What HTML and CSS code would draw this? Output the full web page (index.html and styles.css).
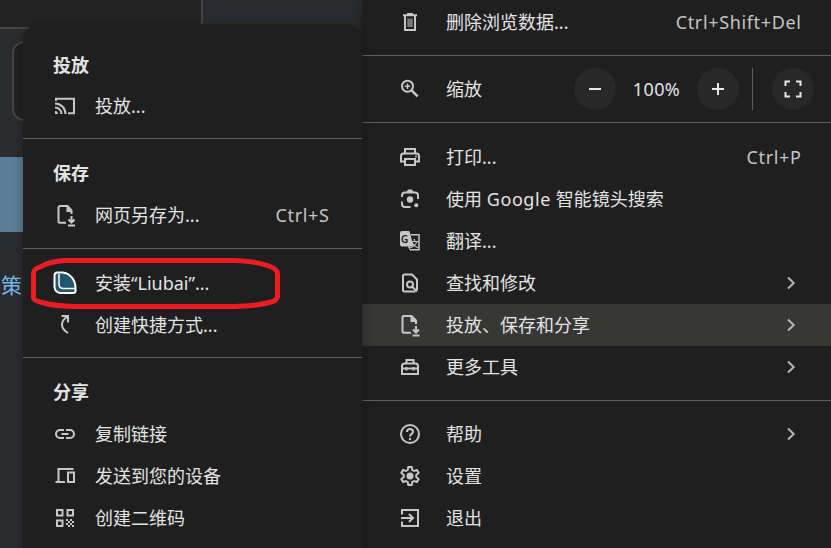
FILE: index.html
```html
<!DOCTYPE html>
<html lang="zh-CN">
<head>
<meta charset="utf-8">
<title>菜单</title>
<link rel="stylesheet" href="styles.css">
</head>
<body>
<div class="page">
  <div class="panel"></div>
  <div class="field"></div>
  <div class="banner"></div>
  <div class="link">策</div>
</div>

<nav class="menu main">
  <div class="item"><svg class="icon" viewBox="0 0 24 24"><path class="s" d="M5 5.2h14M9 4h6M7 6v14h10V6"/><path class="s thin" d="M10.1 8.5v8.5M12 8.5v8.5M13.9 8.5v8.5"/></svg><span class="label">删除浏览数据...</span><span class="key">Ctrl+Shift+Del</span></div>
  <hr>
  <div class="item zoom"><svg class="icon" viewBox="0 0 24 24"><circle class="s" cx="9.5" cy="9.2" r="5.5"/><path class="s bold" d="M13.6 13.3l6 6"/><path class="s mid" d="M6.800 9.2h5.400M9.5 6.500v5.400"/></svg><span class="label">缩放</span>
    <span class="round"><svg class="icon bright" viewBox="0 0 24 24"><path class="s" d="M6 12h12"/></svg></span>
    <span class="percent">100%</span>
    <span class="round"><svg class="icon bright" viewBox="0 0 24 24"><path class="s" d="M6 12h12M12 6v12"/></svg></span>
    <span class="rule"></span>
    <span class="round"><svg class="icon bright" viewBox="0 0 24 24"><path class="s" d="M4.500 9V4.500H9M15 4.500h4.500V9M19.500 15v4.500H15M9 19.500H4.500V15"/></svg></span>
  </div>
  <hr class="wide">
  <div class="item"><svg class="icon" viewBox="0 0 24 24"><path class="s" d="M7 8V4h10v4M7 16.500H3V11q0-2.500 2.500-2.500h13Q21 8.500 21 11v5.500h-4M7 14h10v6H7z"/><circle class="f" cx="18" cy="11.500" r="1"/></svg><span class="label">打印...</span><span class="key">Ctrl+P</span></div>
  <div class="item"><svg class="icon" viewBox="0 0 24 24"><path class="s" d="M4 10V8.500Q4 5.500 7 5.500h10q3 0 3 3V12M4 14.500V17q0 3 3 3h5.500"/><path class="f" d="M8.500 5L10 2.500h4L15.500 5z"/><circle class="f" cx="12" cy="12.500" r="3.200"/><circle class="f" cx="18.300" cy="18.200" r="2"/></svg><span class="label">使用 <span class="latin">Google</span> 智能镜头搜索</span></div>
  <div class="item"><svg class="icon" viewBox="0 0 24 24"><path class="s mid" d="M13 5.800h8v15h-9"/><path class="f" d="M4 2h6.500q1 0 1.300 1L15.500 17.500H12v4L10 17.500H4q-2 0-2-2V4q0-2 2-2z"/><text class="glyph dark" x="2.800" y="13.800">G</text><text class="glyph han" x="11.500" y="17.800">文</text></svg><span class="label">翻译...</span></div>
  <div class="item"><svg class="icon" viewBox="0 0 24 24"><path class="s" d="M17.500 20.500H6.500Q5 20.500 5 19V5q0-1.500 1.500-1.500H14L19 8.500V19"/><circle class="s" cx="12" cy="13.500" r="3"/><path class="s" d="M14 15.500l5 5"/></svg><span class="label">查找和修改</span><svg class="chev" viewBox="0 0 12 16"><path d="M3 2.500L8.700 8 3 13.500"/></svg></div>
  <div class="item active"><svg class="icon" viewBox="0 0 24 24"><path class="s" d="M13 19.800H6Q4.500 19.800 4.500 18.300V4.500Q4.500 3 6 3h7.500L18 7.500V11M18 13v6.500M15 16.500l3 3 3-3M14.500 22.500h7"/><path class="f" d="M12.500 3v6H19z"/></svg><span class="label">投放、保存和分享</span><svg class="chev" viewBox="0 0 12 16"><path d="M3 2.500L8.700 8 3 13.500"/></svg></div>
  <div class="item"><svg class="icon" viewBox="0 0 24 24"><path class="s" d="M8.500 8V5h7v3M4 19V11q0-2.500 2.500-2.500h11Q20 8.500 20 11v8zM4 13.500h16M8.500 12v3.500M15.500 12v3.500"/></svg><span class="label">更多工具</span><svg class="chev" viewBox="0 0 12 16"><path d="M3 2.500L8.700 8 3 13.500"/></svg></div>
  <hr>
  <div class="item"><svg class="icon" viewBox="0 0 24 24"><circle class="s" cx="12" cy="12" r="9"/><path class="s" d="M9 10q0-3 3-3t3 2.800c0 2-3 2.200-3 4.700"/><circle class="f" cx="12" cy="17" r="1.200"/></svg><span class="label">帮助</span><svg class="chev" viewBox="0 0 12 16"><path d="M3 2.500L8.700 8 3 13.500"/></svg></div>
  <div class="item"><svg class="icon" viewBox="0 0 24 24"><path class="s" d="M10.300 3h3.400l.5 2.900 1.900 1.100 2.800-1 1.700 2.900-2.300 2v2.200l2.300 2-1.700 2.900-2.800-1-1.900 1.100-.5 2.900h-3.400l-.5-2.900L7.900 17l-2.800 1-1.700-2.900 2.300-2v-2.200l-2.300-2L5.100 6l2.800 1 1.900-1.100z"/><circle class="f" cx="12" cy="12" r="3.500"/></svg><span class="label">设置</span></div>
  <div class="item"><svg class="icon" viewBox="0 0 24 24"><path class="s" d="M4 8.500V4h16v16H4v-4.500M3 12h11.500M11 8l4 4-4 4"/></svg><span class="label">退出</span></div>
</nav>

<nav class="menu sub">
  <div class="head first">投放</div>
  <div class="item"><svg class="icon" viewBox="0 0 24 24"><path class="s" d="M3 7V4.800h18v14.400h-6"/><path class="s" d="M2 9.500A10.500 10.500 0 0 1 12.500 20M2 13.500A6.500 6.500 0 0 1 8.500 20"/><path class="f" d="M2 17a3 3 0 0 1 3 3H2z"/></svg><span class="label">投放...</span></div>
  <hr>
  <div class="head">保存</div>
  <div class="item"><svg class="icon" viewBox="0 0 24 24"><path class="s" d="M13 19.800H7Q5.500 19.800 5.500 18.300V4.500Q5.500 3 7 3h7.500L18.500 7.500V11M18.500 13v6.500M15.500 16.500l3 3 3-3M15 22.500h7"/><path class="f" d="M13.500 3v6h6z"/></svg><span class="label">网页另存为...</span><span class="key">Ctrl+S</span></div>
  <hr class="wide">
  <div class="item"><svg class="icon" viewBox="0 0 24 24"><path class="logo" d="M4.500 1.500H9.500C17 2 22.500 9 22.500 17v3q0 2-2 2H7q-5-1-5.500-6V4.500Q1.500 1.500 4.500 1.500z"/><path class="logoline" d="M6 3v10q0 4.500 4.500 4.500H22"/></svg><span class="label">安装“Liubai”...</span></div>
  <div class="item"><svg class="icon" viewBox="0 0 24 24"><path class="s" d="M8.500 3H15V9.500M14.500 3.500C7 8.500 7 15 15 20"/></svg><span class="label">创建快捷方式...</span></div>
  <hr>
  <div class="head">分享</div>
  <div class="item"><svg class="icon" viewBox="0 0 24 24"><path class="s" d="M11 8H7a4 4 0 0 0 0 8h4M13 8h4a4 4 0 0 1 0 8h-4M8.500 12h7"/></svg><span class="label">复制链接</span></div>
  <div class="item"><svg class="icon" viewBox="0 0 24 24"><path class="s" d="M20.500 5H5.500v12.500M2.500 18H12M15 8.500h6V18h-6z"/></svg><span class="label">发送到您的设备</span></div>
  <div class="item"><svg class="icon" viewBox="0 0 24 24"><path class="s" d="M4 4h5.500v5.500H4zM14.500 4H20v5.500h-5.500zM4 14.500h5.500V20H4z"/><path class="f" d="M13 13h2v2h-2zM17 13h2v2h-2zM15 15h2v2h-2zM19 15h2v2h-2zM13 17h2v2h-2zM17 17h2v2h-2zM15 19h2v2h-2zM19 19h2v2h-2z"/></svg><span class="label">创建二维码</span></div>
</nav>

<svg class="mark" viewBox="0 0 252 54"><path d="M4.500 42V17Q4.500 13 12 10.500Q20 5.500 36 4.500H205Q227 5 240 10Q248.500 13 248.500 18V40Q248.500 45 240 46.500Q225 50.500 205 50.500H46Q26 50 15 47Q4.500 45 4.500 42Z"/></svg>
</body>
</html>
```
FILE: styles.css
```css
* { box-sizing: border-box; }
body {
  margin: 0;
  width: 831px;
  height: 548px;
  position: relative;
  overflow: hidden;
  background: #2b2c2f;
  color: #e3e3e3;
  font: 18px/42px "Noto Sans", "Noto Sans CJK SC", sans-serif;
}
.panel {
  position: absolute;
  left: -20px;
  top: -20px;
  width: 223px;
  height: 49px;
  background: #232323;
  border: 2px solid #444;
  border-radius: 0 0 8px 0;
}
.field {
  position: absolute;
  left: 12px;
  top: 41px;
  width: 60px;
  height: 80px;
  background: #222;
  border: 2px solid #444;
  border-radius: 12px;
}
.banner {
  position: absolute;
  left: 0;
  top: 157px;
  width: 60px;
  height: 75px;
  background: #5b7f98;
}
.link {
  position: absolute;
  left: 1px;
  top: 264px;
  font-size: 21px;
  color: #78b9e6;
}
.menu {
  position: absolute;
  background: #1f1f1f;
  display: flex;
  flex-direction: column;
  box-shadow: 0 3px 12px rgba(0, 0, 0, .35);
}
.main {
  left: 362px;
  top: 0;
  width: 469px;
  height: 560px;
  padding-top: 1px;
}
.sub {
  left: 23px;
  top: 24px;
  width: 339px;
  height: 540px;
  padding-top: 20px;
  border-radius: 17px 17px 0 0;
}
hr {
  flex: none;
  width: 100%;
  height: 1px;
  margin: 12px 0;
  border: 0;
  background: #5e5e5e;
}
.main .wide { margin-bottom: 13px; }
.sub hr { margin: 11px 0 13px; }
.sub .wide { margin-top: 12px; }
.item {
  flex: none;
  height: 42px;
  display: flex;
  align-items: center;
}
.main .item { padding: 0 30px 0 36px; }
.sub .item { padding: 0 33px 0 30px; }
.main .active { background: #373735; }
.icon {
  flex: none;
  width: 24px;
  height: 24px;
  margin-right: 24px;
}
.sub .icon { margin-right: 18px; }
.label {
  flex: 1;
  white-space: nowrap;
}
.latin { letter-spacing: .6px; }
.key {
  margin-right: -.6px;
  color: #c4c4c4;
  letter-spacing: .65px;
}
.head {
  flex: none;
  height: 42px;
  padding-left: 30px;
  font-weight: 700;
}
.first { height: 41px; }
.s {
  fill: none;
  stroke: #c7c7c7;
  stroke-width: 2;
}
.mid { stroke-width: 1.500; }
.thin { stroke-width: 1; }
.bold { stroke-width: 2.500; }
.f { fill: #c7c7c7; }
.bright .s { stroke: #e8e8e8; }
.glyph {
  font: 600 10.500px "Noto Sans", sans-serif;
  fill: #c7c7c7;
}
.dark { fill: #1f1f1f; }
.han { font: 500 9.500px "Noto Sans CJK SC", sans-serif; }
.chev {
  width: 12px;
  height: 16px;
  margin-right: 4px;
}
.chev path {
  fill: none;
  stroke: #b5b5b5;
  stroke-width: 2;
}
.round {
  flex: none;
  width: 42px;
  height: 42px;
  display: flex;
  align-items: center;
  justify-content: center;
  border-radius: 50%;
  background: #282828;
}
.round .icon,
.sub .round .icon { margin: 0; }
.main .zoom { padding-right: 17px; }
.percent {
  width: 81px;
  text-align: center;
  letter-spacing: .4px;
}
.rule {
  width: 1px;
  height: 42px;
  margin: 0 19px 0 13px;
  background: #5e5e5e;
}
.logo {
  fill: #20566f;
  stroke: #fff;
  stroke-width: 2;
}
.logoline {
  fill: none;
  stroke: #fff;
  stroke-width: 1.500;
}
.mark {
  position: absolute;
  left: 29px;
  top: 256px;
  width: 252px;
  height: 54px;
}
.mark path {
  fill: none;
  stroke: #ed1c24;
  stroke-width: 5;
}
```
